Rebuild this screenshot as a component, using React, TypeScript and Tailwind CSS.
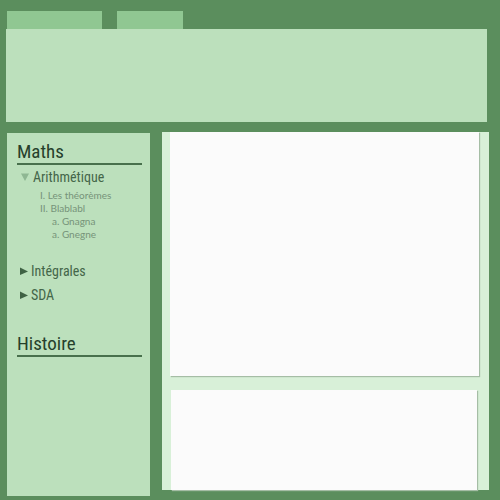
import React from "react";

function Triangle({ open = false }: { open?: boolean }) {
  return open ? (
    <svg className="h-2 w-2 shrink-0 text-[#8fb793]" viewBox="0 0 8 8" fill="currentColor" aria-hidden="true">
      <path d="M0 0.5h8L4 8z" />
    </svg>
  ) : (
    <svg className="h-2 w-2 shrink-0 text-[#3f6244]" viewBox="0 0 8 8" fill="currentColor" aria-hidden="true">
      <path d="M0 0.5v7.5l8-3.5z" />
    </svg>
  );
}

function Heading({ children }: { children: React.ReactNode }) {
  return (
    <h2 className="border-b-2 border-[#48704c] text-[19px] leading-[22px] text-[#26402b]">
      {children}
    </h2>
  );
}

function Chapter({ name, open = false }: { name: string; open?: boolean }) {
  return (
    <button
      type="button"
      aria-expanded={open}
      className={`flex h-6 items-center text-sm text-[#446649] ${open ? "gap-1 pl-1" : "gap-[3px] pl-[3px]"}`}
    >
      <Triangle open={open} />
      {name}
    </button>
  );
}

export default function App() {
  return (
    <div className="flex min-h-screen flex-col bg-[#5b8e5d] pt-[11px] font-['Agency_FB','Roboto_Condensed','Roboto',sans-serif]">
      <header className="ml-1.5 mr-[13px]">
        <nav className="flex h-[18px] gap-[15px] pl-px" aria-label="Sections">
          <div className="w-[95px] bg-[#90c792]" />
          <div className="w-[66px] bg-[#90c792]" />
        </nav>
        <div className="h-[93px] bg-[#bce0bc]" />
      </header>

      <div className="mt-2.5 flex flex-1 gap-3 pl-[7px] pr-[11px]">
        <aside className="mb-1 mt-px w-[143px] shrink-0 bg-[#bce0bc] pl-2.5 pr-2 pt-2">
          <Heading>Maths</Heading>
          <Chapter name="Arithmétique" open />
          <ul className="pl-[23px] font-['Lato',sans-serif] text-[10px] leading-[13px] text-[#769379]">
            <li>I. Les théorèmes</li>
            <li>II. Blablabl</li>
            <li className="pl-3">a. Gnagna</li>
            <li className="pl-3">a. Gnegne</li>
          </ul>
          <div className="mb-[26px] mt-[18px]">
            <Chapter name="Intégrales" />
            <Chapter name="SDA" />
          </div>
          <Heading>Histoire</Heading>
        </aside>

        <main className="mb-2.5 flex flex-1 flex-col gap-3.5 bg-[#d8f0d8] pl-2 pr-2.5">
          <section className="h-[244px] bg-[#fbfbfb] shadow-[1px_1px_1px_#a5bda5]" />
          <section className="ml-px mr-0.5 flex-1 bg-[#fbfbfb] shadow-[1px_1px_1px_#a5bda5]" />
        </main>
      </div>
    </div>
  );
}
